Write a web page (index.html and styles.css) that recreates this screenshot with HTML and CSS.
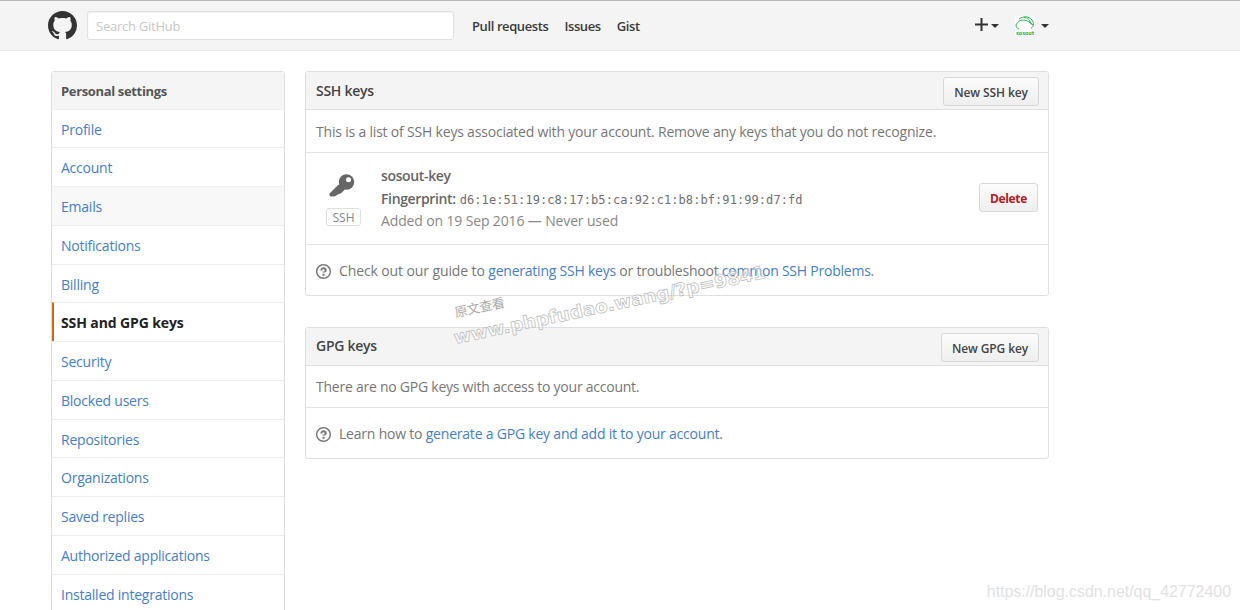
FILE: index.html
```html
<!DOCTYPE html>
<html lang="en">
<head>
<meta charset="utf-8">
<title>SSH and GPG keys</title>
<link rel="stylesheet" href="styles.css">
</head>
<body>
<header class="topbar">
  <svg class="logo" viewBox="0 0 16 16"><path d="M8 0C3.58 0 0 3.58 0 8c0 3.54 2.29 6.53 5.47 7.59.4.07.55-.17.55-.38 0-.19-.01-.82-.01-1.49-2.01.37-2.53-.49-2.69-.94-.09-.23-.48-.94-.82-1.13-.28-.15-.68-.52-.01-.53.63-.01 1.08.58 1.23.82.72 1.21 1.87.87 2.33.66.07-.52.28-.87.51-1.07-1.78-.2-3.64-.89-3.64-3.95 0-.87.31-1.59.82-2.15-.08-.2-.36-1.02.08-2.12 0 0 .67-.21 2.2.82.64-.18 1.32-.27 2-.27.68 0 1.36.09 2 .27 1.53-1.04 2.2-.82 2.2-.82.44 1.1.16 1.92.08 2.12.51.56.82 1.27.82 2.15 0 3.07-1.87 3.75-3.65 3.95.29.25.54.73.54 1.48 0 1.07-.01 1.93-.01 2.2 0 .21.15.46.55.38A8.013 8.013 0 0 0 16 8c0-4.42-3.58-8-8-8z"/></svg>
  <div class="search">Search GitHub</div>
  <nav class="nav"><a>Pull requests</a><a>Issues</a><a>Gist</a></nav>
  <div class="user">
    <svg class="plus" viewBox="0 0 13 13"><path d="M6.5 0v13M0 6.500h13"/></svg>
    <i class="caret"></i>
    <svg class="avatar" viewBox="0 0 20 20">
      <rect width="20" height="20" fill="#fff"/>
      <path d="M4 3C8 0 14 0 17 4c2 3 2 6-1 8.500M1 9C3 4 10 1 18.500 9.500M9 1.500c4 0 6 3 7.500 7M1 9c0 2 1 3.500 3 4" fill="none" stroke="#25b04a" stroke-width="1"/>
      <text x="1" y="18.500" textLength="18" lengthAdjust="spacingAndGlyphs">sosout</text>
    </svg>
    <i class="caret"></i>
  </div>
</header>
<div class="page">
  <nav class="menu">
    <h3 class="menu-head">Personal settings</h3>
    <a class="item">Profile</a>
    <a class="item">Account</a>
    <a class="item hover">Emails</a>
    <a class="item">Notifications</a>
    <a class="item">Billing</a>
    <a class="item selected">SSH and GPG keys</a>
    <a class="item">Security</a>
    <a class="item">Blocked users</a>
    <a class="item">Repositories</a>
    <a class="item">Organizations</a>
    <a class="item">Saved replies</a>
    <a class="item">Authorized applications</a>
    <a class="item">Installed integrations</a>
  </nav>
  <main class="main">
    <section class="box">
      <div class="box-head"><h2>SSH keys</h2><button class="btn btn-ssh">New SSH key</button></div>
      <p class="desc">This is a list of SSH keys associated with your account. Remove any keys that you do not recognize.</p>
      <div class="key">
        <div class="key-type">
          <svg class="key-icon" viewBox="0 0 26 24"><path d="M10.500 12.500 2.500 20.500M5 20.500l3-2 3-1 3-3" fill="none" stroke="#666" stroke-width="4" stroke-linecap="round"/><circle cx="17.500" cy="8" r="7.700" fill="#666"/><circle cx="19.500" cy="5.800" r="2.500" fill="#fff"/></svg>
          <span class="tag">SSH</span>
        </div>
        <div class="key-info">
          <strong class="key-name">sosout-key</strong>
          <div class="print"><b>Fingerprint:</b><code>d6:1e:51:19:c8:17:b5:ca:92:c1:b8:bf:91:99:d7:fd</code></div>
          <div class="added">Added on 19 Sep 2016 — Never used</div>
        </div>
        <button class="btn danger">Delete</button>
      </div>
      <p class="help"><svg class="q" viewBox="0 0 14 14"><path transform="translate(0 -1)" d="M6 10h2v2H6v-2zm4-3.500C10 8.640 8 9 8 9H6c0-.55.45-1 1-1h.5c.28 0 .5-.22.5-.5v-1c0-.28-.22-.5-.5-.5h-1c-.28 0-.5.22-.5.5V7H4c0-1.500 1.500-3 3-3s3 1 3 2.500zM7 2.300c3.140 0 5.700 2.560 5.700 5.700s-2.560 5.700-5.700 5.700A5.710 5.710 0 0 1 1.300 8c0-3.140 2.560-5.700 5.700-5.700zM7 1C3.140 1 0 4.140 0 8s3.140 7 7 7 7-3.140 7-7-3.140-7-7-7z"/></svg><span><span class="lead">Check out our guide to </span><a>generating SSH keys</a> or troubleshoot <a>common SSH Problems</a>.</span></p>
    </section>
    <section class="box gpg">
      <div class="box-head"><h2>GPG keys</h2><button class="btn btn-gpg">New GPG key</button></div>
      <p class="desc">There are no GPG keys with access to your account.</p>
      <p class="help"><svg class="q" viewBox="0 0 14 14"><path transform="translate(0 -1)" d="M6 10h2v2H6v-2zm4-3.500C10 8.640 8 9 8 9H6c0-.55.45-1 1-1h.5c.28 0 .5-.22.5-.5v-1c0-.28-.22-.5-.5-.5h-1c-.28 0-.5.22-.5.5V7H4c0-1.500 1.500-3 3-3s3 1 3 2.500zM7 2.300c3.140 0 5.700 2.560 5.700 5.700s-2.560 5.700-5.700 5.700A5.710 5.710 0 0 1 1.300 8c0-3.140 2.560-5.700 5.700-5.700zM7 1C3.140 1 0 4.140 0 8s3.140 7 7 7 7-3.140 7-7-3.140-7-7-7z"/></svg><span>Learn how to <a>generate a GPG key and add it to your account</a>.</span></p>
    </section>
  </main>
</div>
<svg class="stamp" viewBox="0 0 330 100">
  <g transform="rotate(-12 8 93)">
    <text class="stamp-cn" x="14" y="68" textLength="51">原文查看</text>
    <text class="stamp-url" x="8" y="94" textLength="318" lengthAdjust="spacingAndGlyphs">www.phpfudao.wang/?p=9841</text>
  </g>
</svg>
<div class="credit">https://blog.csdn.net/qq_42772400</div>
</body>
</html>
```
FILE: styles.css
```css
* { box-sizing: border-box; }
html { overflow: hidden; }
body {
  margin: 0;
  height: 610px;
  overflow: hidden;
  background: #fff;
  color: #777;
  font: 14px/22.4px "Open Sans", "Noto Sans", sans-serif;
  letter-spacing: -.2px;
}
h2, h3, p { margin: 0; font-size: 14px; }
a { color: #4580cb; }

.topbar {
  display: flex;
  align-items: center;
  height: 51px;
  padding: 0 191px 0 48px;
  background: #f4f4f4;
  border-top: 1px solid #b8b8b8;
  border-bottom: 1px solid #e8e8e8;
}
.logo { width: 29px; height: 29px; fill: #333; }
.search {
  width: 367px;
  height: 29px;
  margin-left: 10px;
  padding-left: 8px;
  background: #fff;
  border: 1px solid #e0e0e0;
  border-radius: 3px;
  box-shadow: inset 0 1px 2px rgba(0, 0, 0, .06);
  color: #c8c8c8;
  font-size: 13px;
  line-height: 29px;
  letter-spacing: -.25px;
}
.nav { display: flex; gap: 16px; margin: 1px 0 0 18px; }
.nav a { color: #3a3a3a; font-size: 13px; font-weight: 600; letter-spacing: -.4px; }
.user { display: flex; align-items: center; margin-left: auto; }
.plus { width: 13px; height: 13px; margin-top: -2px; fill: none; stroke: #333; stroke-width: 2; }
.caret {
  margin-left: 3px;
  border: 4px solid transparent;
  border-top-color: #333;
  border-bottom: 0;
}
.avatar { width: 20px; height: 20px; margin-left: 16px; overflow: visible; }
.avatar text { fill: #25b04a; font: bold 5.500px "DejaVu Sans", sans-serif; letter-spacing: 0; }
.avatar + .caret { margin-left: 6px; }

.page { display: flex; gap: 20px; padding: 20px 0 0 51px; }
.menu {
  width: 234px;
  height: 560px;
  flex: none;
  border: 1px solid #e0e0e0;
  border-radius: 3px;
}
.menu-head {
  height: 36.500px;
  padding: 0 9px;
  background: #f5f5f5;
  color: #555;
  font-size: 13px;
  font-weight: 700;
  line-height: 38px;
  letter-spacing: -.35px;
}
.item {
  display: block;
  height: 38.750px;
  padding: 0 9px;
  border-top: 1px solid #eee;
  line-height: 39.500px;
  letter-spacing: -.23px;
}
.hover { background: #f8f8f8; }
.selected {
  padding-left: 7px;
  border-left: 2px solid #d26911;
  color: #222;
  font-weight: 700;
  letter-spacing: -.12px;
}

.main { width: 744px; }
.box { margin-bottom: 31px; border: 1px solid #e0e0e0; border-radius: 3px; }
.box-head {
  display: flex;
  align-items: center;
  justify-content: space-between;
  height: 38px;
  padding: 1px 9px 0 10px;
  background: #f4f4f4;
  border-bottom: 1px solid #e0e0e0;
}
.box-head h2 { color: #444; font-weight: 600; line-height: 36px; letter-spacing: -.28px; }
.gpg .box-head h2 { margin-top: -2px; }
.btn {
  height: 29px;
  padding: 1px 0 0;
  border: 1px solid #d8d8d8;
  border-radius: 3px;
  background: linear-gradient(#fcfcfc, #eee);
  color: #444;
  font: 600 12px/27px "Open Sans", "Noto Sans", sans-serif;
  letter-spacing: -.1px;
}
.btn-ssh { width: 96px; }
.btn-gpg { width: 98px; }
.danger { width: 59px; margin-top: -2px; color: #b02024; font-weight: 700; letter-spacing: -.35px; }
.desc { height: 43px; padding-left: 10px; border-bottom: 1px solid #e4e4e4; line-height: 43px; letter-spacing: -.195px; }
.gpg .desc { height: 42px; line-height: 42px; letter-spacing: -.245px; }
.key {
  display: flex;
  align-items: center;
  height: 92px;
  padding: 0 10px 0 20px;
  border-bottom: 1px solid #e4e4e4;
}
.key-type { display: flex; flex-direction: column; align-items: center; width: 35px; margin-top: 2px; }
.key-icon { width: 26px; height: 24px; margin-right: 3px; }
.tag {
  width: 35px;
  height: 18px;
  margin-top: 10px;
  border: 1px solid #e0e0e0;
  border-radius: 3px;
  color: #888;
  font-size: 12px;
  line-height: 17px;
  text-align: center;
  letter-spacing: 0;
}
.key-info { flex: 1; margin: 1px 0 0 20px; }
.key-name, .print b { color: #666; font-weight: 600; letter-spacing: -.36px; }
.print b { margin-right: 4px; }
.print code { color: #707070; font: 12px "DejaVu Sans Mono", monospace; letter-spacing: .07px; }
.added { color: #888; letter-spacing: -.14px; }
.help { display: flex; align-items: center; height: 50px; padding: 2px 0 0 10px; letter-spacing: -.23px; }
.help .lead { letter-spacing: -.11px; }
.gpg .help { padding-top: 2px; letter-spacing: -.21px; }
.q { width: 15px; height: 15px; margin-right: 8px; fill: #777; }

/* Diagonal stamp over the panels */
.stamp { position: absolute; left: 447px; top: 250px; width: 330px; height: 100px; overflow: visible; letter-spacing: 0; }
.stamp-cn { fill: #aaa; font: 13px "Noto Sans CJK SC", sans-serif; }
.stamp-url { fill: rgba(255, 255, 255, .5); stroke: #bbb; stroke-width: .7; font: bold 18px "DejaVu Sans", sans-serif; }
.credit {
  position: absolute;
  right: 9px;
  bottom: 8px;
  color: #e2e2e2;
  font: 16px/20px "Liberation Sans", sans-serif;
  letter-spacing: -.04px;
}
```
